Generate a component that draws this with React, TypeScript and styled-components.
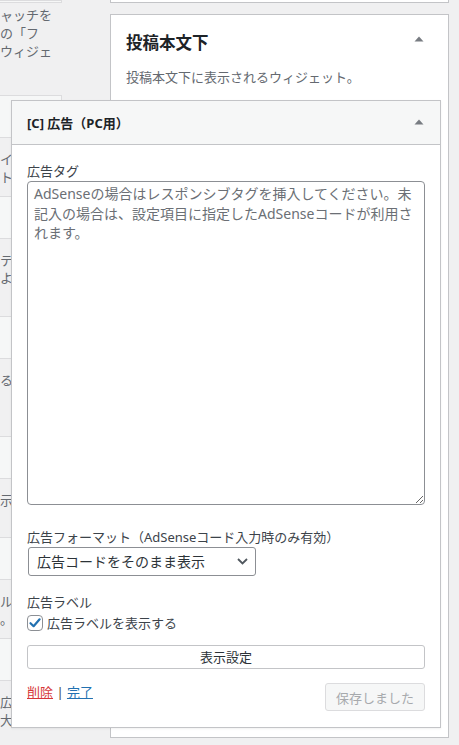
import React from 'react';
import styled, { createGlobalStyle } from 'styled-components';

const GlobalStyle = createGlobalStyle`
  html, body {
    margin: 0;
    padding: 0;
    background: #f0f0f1;
  }

  body {
    font-family: "Noto Sans", "Noto Sans CJK JP", sans-serif;
    font-size: 13px;
    color: #3c434a;
  }
`;

const Screen = styled.div`
  position: relative;
  display: flex;
  gap: 48px;
  width: 459px;
  height: 745px;
  overflow: hidden;
`;

// available widgets, mostly hidden behind the open panel
const LeftColumn = styled.div`
  display: flex;
  flex-direction: column;
  flex-shrink: 0;
  width: 62px;
`;

const WidgetTitle = styled.div<{ $height?: number }>`
  box-sizing: border-box;
  flex-shrink: 0;
  height: ${({ $height }) => $height ?? 43}px;
  background: #f6f7f7;
  border: 1px solid #dcdcde;
  border-left: none;
`;

const WidgetDesc = styled.div<{ $top?: number; $bottom?: number }>`
  flex-shrink: 0;
  padding: ${({ $top }) => $top ?? 12}px 0 ${({ $bottom }) => $bottom ?? 10}px;
  font-size: 13px;
  line-height: 18px;
  color: #646970;
  white-space: nowrap;
  overflow: hidden;
`;

const RightColumn = styled.div`
  display: flex;
  flex-direction: column;
  flex-shrink: 0;
  gap: 11px;
  width: 339px;
`;

const SidebarBox = styled.div`
  box-sizing: border-box;
  background: #fff;
  border: 1px solid #c3c4c7;
`;

const PrevBox = styled(SidebarBox)`
  height: 40px;
  margin-top: -37px;
  flex-shrink: 0;
`;

const MainBox = styled(SidebarBox)`
  flex: 1;
  margin-bottom: 7px;
  padding: 16px 15px;
`;

const SidebarHead = styled.div`
  display: flex;
  justify-content: space-between;
  align-items: flex-start;
`;

const SidebarTitle = styled.h2`
  margin: 0;
  font-size: 16.5px;
  font-weight: 700;
  line-height: 24px;
  color: #1d2327;
`;

const SidebarText = styled.p`
  margin: 12px 0 0;
  font-size: 13px;
  line-height: 20px;
  color: #646970;
`;

const ArrowWrap = styled.span<{ $offset?: number }>`
  display: flex;
  margin-top: ${({ $offset }) => $offset ?? 0}px;
  margin-right: 9px;
`;

// the open widget form that lies over both columns
const Panel = styled.div`
  position: absolute;
  left: 11px;
  top: 100px;
  box-sizing: border-box;
  width: 430px;
  background: #fff;
  border: 1px solid #c3c4c7;
  box-shadow: 0 1px 2px rgba(0, 0, 0, 0.06);
`;

const PanelHeader = styled.div`
  box-sizing: border-box;
  display: flex;
  justify-content: space-between;
  align-items: center;
  height: 44px;
  padding: 1px 15px 0;
  background: #f6f7f7;
  border-bottom: 1px solid #c3c4c7;

  ${ArrowWrap} {
    margin-right: 1px;
    margin-top: -3px;
  }
`;

const PanelTitle = styled.h3`
  margin: 0;
  font-size: 13px;
  font-weight: 700;
  line-height: 18px;
  color: #1d2327;
`;

const PanelBody = styled.div`
  padding: 17px 15px 16px;
`;

const Field = styled.div<{ $gap?: number }>`
  margin-top: ${({ $gap }) => $gap ?? 0}px;
`;

const Label = styled.label`
  display: block;
  margin-bottom: 1px;
  font-size: 13px;
  line-height: 18px;
  color: #3c434a;
`;

const TextArea = styled.textarea`
  display: block;
  box-sizing: border-box;
  width: 100%;
  height: 324px;
  margin: 0;
  padding: 2px 6px;
  font-family: inherit;
  font-size: 14px;
  line-height: 19.5px;
  color: #2c3338;
  background: #fff;
  border: 1px solid #8c8f94;
  border-radius: 4px;
  resize: vertical;

  &::placeholder {
    color: #6b6f75;
  }
`;

const SelectWrap = styled.div`
  position: relative;
  width: 228px;
  margin-left: 1px;
`;

const Select = styled.select`
  display: block;
  box-sizing: border-box;
  width: 100%;
  height: 29px;
  margin: 0;
  padding: 0 26px 0 8px;
  font-family: inherit;
  font-size: 14px;
  color: #2c3338;
  background: #fff;
  border: 1px solid #8c8f94;
  border-radius: 3px;
  appearance: none;
`;

const Chevron = styled.svg`
  position: absolute;
  right: 8px;
  top: 11px;
  pointer-events: none;
`;

const CheckRow = styled.label`
  display: flex;
  align-items: center;
  gap: 4px;
  margin-top: 2px;
  font-size: 13px;
  line-height: 20px;
  color: #3c434a;
`;

const CheckBox = styled.span`
  box-sizing: border-box;
  display: flex;
  align-items: center;
  justify-content: center;
  width: 16px;
  height: 16px;
  background: #fff;
  border: 1px solid #8c8f94;
  border-radius: 4px;
`;

const WideButton = styled.button`
  display: block;
  box-sizing: border-box;
  width: 100%;
  height: 24px;
  margin-top: 12px;
  padding: 0;
  font-family: inherit;
  font-size: 13px;
  line-height: 22px;
  color: #2c3338;
  background: #fff;
  border: 1px solid #c3c4c7;
  border-radius: 3px;
`;

const Footer = styled.div`
  display: flex;
  justify-content: space-between;
  align-items: flex-start;
  margin-top: 14px;
`;

const Actions = styled.div`
  font-size: 13px;
  line-height: 18px;
  color: #3c434a;
`;

const ActionLink = styled.a<{ $danger?: boolean }>`
  color: ${({ $danger }) => ($danger ? '#d63638' : '#2271b1')};
  text-decoration: underline;
  cursor: pointer;
`;

const SaveButton = styled.button`
  box-sizing: border-box;
  height: 28px;
  padding: 0 10px;
  font-family: inherit;
  font-size: 13px;
  color: #a7aaad;
  background: #f6f7f7;
  border: 1px solid #dcdcde;
  border-radius: 3px;
`;

function UpArrow({ offset }: { offset?: number }) {
  return (
    <ArrowWrap $offset={offset}>
      <svg width="10" height="6" viewBox="0 0 10 6">
        <path d="M0.5 5.5 L5 0.5 L9.5 5.5 Z" fill="#787c82" />
      </svg>
    </ArrowWrap>
  );
}

const leftWidgets: { lines: string[]; bottom?: number }[] = [
  { lines: ['イ', 'ト'] },
  { lines: ['テ', 'よ', ''], bottom: 11 },
  { lines: ['る', '', ''], bottom: 11 },
  { lines: ['示', ''] },
  { lines: ['ル', '。'] },
  { lines: ['広', '大き', ''] },
];

export default function App() {
  return (
    <>
      <GlobalStyle />
      <Screen>
        <LeftColumn>
          <WidgetTitle $height={3} />
          <WidgetDesc $top={3} $bottom={35}>
            ャッチを<br />
            の「フ<br />
            ウィジェ
          </WidgetDesc>
          {leftWidgets.map((w, i) => (
            <React.Fragment key={i}>
              <WidgetTitle />
              <WidgetDesc $bottom={w.bottom}>
                {w.lines.map((l, j) => (
                  <div key={j}>{l || '\u00a0'}</div>
                ))}
              </WidgetDesc>
            </React.Fragment>
          ))}
        </LeftColumn>

        <RightColumn>
          <PrevBox />
          <MainBox>
            <SidebarHead>
              <SidebarTitle>投稿本文下</SidebarTitle>
              <UpArrow offset={5} />
            </SidebarHead>
            <SidebarText>投稿本文下に表示されるウィジェット。</SidebarText>
          </MainBox>
        </RightColumn>

        <Panel>
          <PanelHeader>
            <PanelTitle>[C] 広告（PC用）</PanelTitle>
            <UpArrow />
          </PanelHeader>
          <PanelBody>
            <Field>
              <Label htmlFor="ad-tag">広告タグ</Label>
              <TextArea
                id="ad-tag"
                placeholder="AdSenseの場合はレスポンシブタグを挿入してください。未記入の場合は、設定項目に指定したAdSenseコードが利用されます。"
              />
            </Field>

            <Field $gap={23}>
              <Label htmlFor="ad-format">広告フォーマット（AdSenseコード入力時のみ有効）</Label>
              <SelectWrap>
                <Select id="ad-format" defaultValue="raw">
                  <option value="raw">広告コードをそのまま表示</option>
                  <option value="rect">レクタングル</option>
                </Select>
                <Chevron width="11" height="7" viewBox="0 0 11 7">
                  <path d="M1 1 L5.5 5.5 L10 1" fill="none" stroke="#50575e" strokeWidth="1.8" />
                </Chevron>
              </SelectWrap>
            </Field>

            <Field $gap={17}>
              <Label as="div">広告ラベル</Label>
              <CheckRow>
                <CheckBox>
                  <svg width="14" height="14" viewBox="0 0 14 14">
                    <path d="M2.5 7.2 L5.6 10.2 L11.6 3.3" fill="none" stroke="#2271b1" strokeWidth="2.2" strokeLinecap="round" strokeLinejoin="round" />
                  </svg>
                </CheckBox>
                広告ラベルを表示する
              </CheckRow>
            </Field>

            <WideButton type="button">表示設定</WideButton>

            <Footer>
              <Actions>
                <ActionLink $danger>削除</ActionLink> | <ActionLink>完了</ActionLink>
              </Actions>
              <SaveButton type="button" disabled>保存しました</SaveButton>
            </Footer>
          </PanelBody>
        </Panel>
      </Screen>
    </>
  );
}
